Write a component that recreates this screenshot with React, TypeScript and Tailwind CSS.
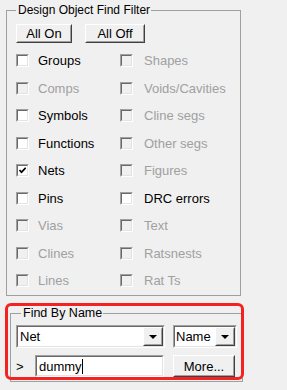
import React from 'react';

const ui = "font-['Liberation_Sans',Arial,sans-serif] text-[13px] leading-[15px]";

const Check: React.FC<{ checked?: boolean; disabled?: boolean }> = ({ checked, disabled }) => (
  <div className="w-[13px] h-[13px] shrink-0 border border-t-[#a0a0a0] border-l-[#a0a0a0] border-b-white border-r-white">
    <div
      className={`w-full h-full flex items-center justify-center border border-t-[#696969] border-l-[#696969] border-b-[#e3e3e3] border-r-[#e3e3e3] ${
        disabled ? 'bg-[#f0f0f0]' : 'bg-white'
      }`}
    >
      {checked && (
        <svg width="7" height="7" viewBox="0 0 7 7">
          <path d="M0.5 3 L2.5 5.2 L6.7 0.8" stroke="black" strokeWidth="1.7" fill="none" />
        </svg>
      )}
    </div>
  </div>
);

const Raised: React.FC<{ className?: string; children?: React.ReactNode }> = ({ className = '', children }) => (
  <div className={`border border-t-white border-l-white border-b-[#404040] border-r-[#404040] ${className}`}>
    <div className="w-full h-full flex items-center justify-center border border-t-[#f0f0f0] border-l-[#f0f0f0] border-b-[#a0a0a0] border-r-[#a0a0a0] bg-[#f0f0f0]">
      {children}
    </div>
  </div>
);

const Sunken: React.FC<{ className?: string; children?: React.ReactNode }> = ({ className = '', children }) => (
  <div className={`border border-t-[#a0a0a0] border-l-[#a0a0a0] border-b-white border-r-white ${className}`}>
    <div className="w-full h-full flex items-center border border-t-[#696969] border-l-[#696969] border-b-[#e3e3e3] border-r-[#e3e3e3] bg-white">
      {children}
    </div>
  </div>
);

const Arrow = () => (
  <Raised className="w-[20px] h-full shrink-0">
    <svg width="8" height="4" viewBox="0 0 8 4">
      <path d="M0 0 H8 L4 4 Z" fill="black" />
    </svg>
  </Raised>
);

// label, disabled, checked | label, disabled
const rows: [string, boolean, boolean, string, boolean][] = [
  ['Groups', false, false, 'Shapes', true],
  ['Comps', true, false, 'Voids/Cavities', true],
  ['Symbols', false, false, 'Cline segs', true],
  ['Functions', false, false, 'Other segs', true],
  ['Nets', false, true, 'Figures', true],
  ['Pins', false, false, 'DRC errors', false],
  ['Vias', true, false, 'Text', true],
  ['Clines', true, false, 'Ratsnests', true],
  ['Lines', true, false, 'Rat Ts', true],
];

export default function App() {
  return (
    <div className={`relative w-[287px] h-[390px] bg-[#f0f0f0] text-black overflow-hidden ${ui}`}>
      <fieldset className="ml-[6px] mt-[3px] w-[235px] h-[293px] border border-[#a0a0a0] px-[9px]">
        <legend className="pl-[2px] pr-[1px] text-[12px]">Design Object Find Filter</legend>
        <div className="mt-[6px] flex gap-[13px]">
          <Raised className="w-[56px] h-[19px]">All On</Raised>
          <Raised className="w-[60px] h-[19px]">All Off</Raised>
        </div>
        <div className="mt-[4px] grid grid-cols-[104px_1fr]">
          {rows.map(([a, ad, ac, b, bd]) => (
            <React.Fragment key={a}>
              <div className="h-[27.5px] flex items-center">
                <Check disabled={ad} checked={ac} />
                <span className={`ml-[9px] ${ad ? 'text-[#a0a0a0]' : ''}`}>{a}</span>
              </div>
              <div className="h-[27.5px] flex items-center">
                <Check disabled={bd} />
                <span className={`ml-[11px] whitespace-nowrap ${bd ? 'text-[#a0a0a0]' : ''}`}>{b}</span>
              </div>
            </React.Fragment>
          ))}
        </div>
      </fieldset>

      <fieldset className="ml-[10px] mt-[9.5px] w-[231px] h-[76px] border border-[#a0a0a0] px-[5px]">
        <legend className="ml-[5px] pl-[2px] pr-[1px] text-[12.5px]">Find By Name</legend>
        <div className="mt-[4.5px] flex gap-[8px] h-[23px]">
          <Sunken className="w-[149px] h-full">
            <span className="flex-1 pl-[2px]">Net</span>
            <Arrow />
          </Sunken>
          <Sunken className="w-[64px] h-full">
            <span className="flex-1 pl-[1px]">Name</span>
            <Arrow />
          </Sunken>
        </div>
        <div className="mt-[7px] flex items-center h-[22px]">
          <span className="w-[19px]">&gt;</span>
          <Sunken className="w-[129px] h-full">
            <span className="pl-[2px]">dummy</span>
            <span className="w-px h-[15px] bg-black" />
          </Sunken>
          <Raised className="ml-[9px] w-[62px] h-full">More...</Raised>
        </div>
      </fieldset>

      <div className="absolute left-[5px] top-[303px] w-[239px] h-[77px] border-[3px] border-[#f52222] rounded-[6px] pointer-events-none" />
    </div>
  );
}
